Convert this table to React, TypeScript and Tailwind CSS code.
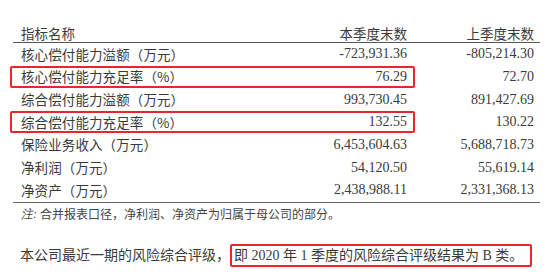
import React from "react";

const rows: { label: string; cur: string; prev: string; hl?: boolean }[] = [
  { label: "核心偿付能力溢额（万元）", cur: "-723,931.36", prev: "-805,214.30" },
  { label: "核心偿付能力充足率（%）", cur: "76.29", prev: "72.70", hl: true },
  { label: "综合偿付能力溢额（万元）", cur: "993,730.45", prev: "891,427.69" },
  { label: "综合偿付能力充足率（%）", cur: "132.55", prev: "130.22", hl: true },
  { label: "保险业务收入（万元）", cur: "6,453,604.63", prev: "5,688,718.73" },
  { label: "净利润（万元）", cur: "54,120.50", prev: "55,619.14" },
  { label: "净资产（万元）", cur: "2,438,988.11", prev: "2,331,368.13" },
];

export default function App() {
  return (
    <div className="w-[554px] h-[276px] bg-white text-[#3a3a3a] overflow-hidden">
      <div className="pt-[24px] pl-[13px] w-[540px]">
        <div className="flex items-center h-[18px] border-b-[1.5px] border-[#555] box-content font-['Noto_Sans_CJK_SC',sans-serif] text-[13.5px]">
          <div className="w-[264px] pl-[8px]">指标名称</div>
          <div className="w-[130px] text-right">本季度末数</div>
          <div className="w-[127px] text-right">上季度末数</div>
        </div>
        <div className="border-b border-[#666]">
          {rows.map((r) => (
            <div key={r.label} className="relative flex items-center h-[22.67px] leading-none">
              <div className="w-[264px] pl-[8px] text-[13.5px] tracking-[0.1px] font-['Noto_Sans_CJK_SC',sans-serif]">
                {r.label}
              </div>
              <div className="w-[130px] text-right text-[14px] font-['Liberation_Serif',serif]">{r.cur}</div>
              <div className="w-[127px] text-right text-[14px] font-['Liberation_Serif',serif]">{r.prev}</div>
              {r.hl && (
                <div className="absolute top-[0.5px] bottom-[0.5px] left-[-3px] w-[405px] border-2 border-[#e8262b] rounded-[2px]" />
              )}
            </div>
          ))}
        </div>
      </div>
      <div className="pl-[21px] mt-[3px] h-[16px] flex items-center text-[12px] leading-none text-[#444] font-['Noto_Sans_CJK_SC',sans-serif]">
        <span className="italic font-['Liberation_Serif',serif]">注:</span>
        <span className="ml-[3px]">合并报表口径，净利润、净资产为归属于母公司的部分。</span>
      </div>
      <div className="pl-[20px] mt-[22px] text-[14px] leading-[23px] whitespace-nowrap font-['Liberation_Serif','Noto_Sans_CJK_SC',serif]">
        本公司最近一期的风险综合评级，
        <span className="inline-block border-2 border-[#e8262b] rounded-[2px] pl-[2px] pr-[7px] leading-[19px]">
          即 2020 年 1 季度的风险综合评级结果为 B 类。
        </span>
      </div>
    </div>
  );
}
